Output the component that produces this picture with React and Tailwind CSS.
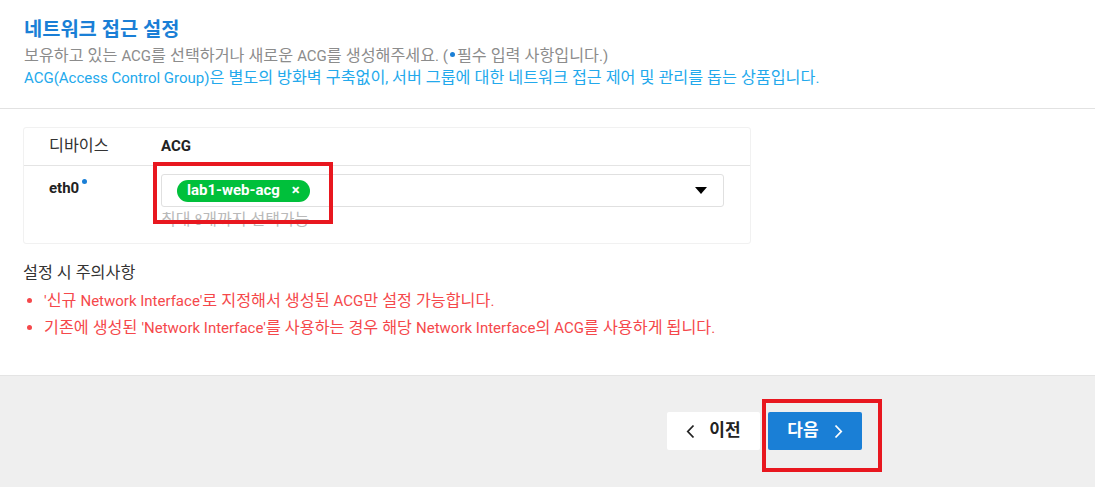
import React from "react";

const font = "font-['Roboto','Noto_Sans_CJK_KR',sans-serif]";

// Hangul runs render narrower here than in the reference, so they get their own size
function Ko({ text, k }) {
  const parts = text.split(/([\uAC00-\uD7A3][\uAC00-\uD7A3 ]*)/);
  return parts.map((p, i) =>
    /[\uAC00-\uD7A3]/.test(p) ? (
      <span key={i} className={k}>
        {p}
      </span>
    ) : (
      p
    )
  );
}

function Dot({ className = "" }) {
  return <span className={"inline-block w-[5px] h-[5px] rounded-full bg-[#1a7fd6] " + className} />;
}

const ko = "text-[16.2px]";

export default function App() {
  return (
    <div className={"w-[1095px] h-[487px] bg-white flex flex-col overflow-hidden " + font}>
      {/* Header */}
      <div className="px-6 pt-[18px] pb-[19px] border-b border-[#e2e2e2]">
        <h1 className="text-[17px] font-bold text-[#1a7fd6] leading-6">
          <Ko text="네트워크 접근 설정" k="text-[19.8px]" />
        </h1>
        <p className="mt-[3px] text-[15px] leading-[22px] text-[#8c8c8c]">
          <Ko text="보유하고 있는 ACG를 선택하거나 새로운 ACG를 생성해주세요. (" k={ko} />
          <Dot className="mb-[4px] mx-[2px]" />
          <Ko text="필수 입력 사항입니다.)" k={ko} />
        </p>
        <p className="text-[15px] leading-[22px] text-[#23a9ec]">
          <Ko text="ACG(Access Control Group)은 별도의 방화벽 구축없이, 서버 그룹에 대한 네트워크 접근 제어 및 관리를 돕는 상품입니다." k={ko} />
        </p>
      </div>

      {/* Body */}
      <div className="px-[23px] pt-[18px] flex-1">
        <div className="w-[728px] border border-[#f1f1f1] rounded-[3px]">
          <div className="flex h-[38px] items-center border-b border-[#e4e4e4] text-[15px]">
            <div className="w-[137px] pl-[25px] text-[#333]">
              <Ko text="디바이스" k={ko} />
            </div>
            <div className="font-bold text-[#222]">ACG</div>
          </div>
          <div className="flex pt-2 pb-[13px]">
            <div className="w-[137px] pl-[25px] pt-[3px] text-[15px] font-bold text-[#222]">
              eth0<Dot className="ml-[3px] mb-[9px]" />
            </div>
            <div className="relative">
              <div className="w-[563px] h-[33px] border border-[#e0e0e0] rounded-[3px] flex items-center px-[15px]">
                <span className="h-[22px] rounded-full bg-[#00c03b] text-white text-[15px] font-bold flex items-center pl-[10px] pr-[10px]">
                  lab1-web-acg
                  <span className="ml-[12px] text-[15px] leading-none">×</span>
                </span>
                <span className="ml-auto mr-[1px] w-0 h-0 border-l-[6px] border-r-[6px] border-t-[7px] border-l-transparent border-r-transparent border-t-black" />
              </div>
              <div className="mt-[3px] text-[14px] leading-5 text-[#b9b9b9]">
                <Ko text="최대 8개까지 선택가능" k="text-[16px]" />
              </div>
              <div className="absolute left-[-8px] top-[-12px] w-[180px] h-[62px] border-[4px] border-[#e8171f]" />
            </div>
          </div>
        </div>

        <div className="mt-[19px] text-[15px] text-[#333] leading-5">
          <Ko text="설정 시 주의사항" k={ko} />
        </div>
        <ul className="mt-[4px] text-[15px] text-[#f5484b] leading-[27px]">
          <li className="flex items-center h-[27px]">
            <span className="w-[5px] h-[5px] rounded-full bg-[#f5484b] ml-[4px] mr-[12px] shrink-0" />
            <span>
              <Ko text="'신규 Network Interface'로 지정해서 생성된 ACG만 설정 가능합니다." k={ko} />
            </span>
          </li>
          <li className="flex items-center h-[27px]">
            <span className="w-[5px] h-[5px] rounded-full bg-[#f5484b] ml-[4px] mr-[12px] shrink-0" />
            <span>
              <Ko text="기존에 생성된 'Network Interface'를 사용하는 경우 해당 Network Interface의 ACG를 사용하게 됩니다." k={ko} />
            </span>
          </li>
        </ul>
      </div>

      {/* Footer */}
      <div className="h-[112px] bg-[#efefef] border-t border-[#e4e4e4] flex justify-end pr-[233px] pt-[36px]">
        <div className="flex gap-2 h-[38px]">
          <button className="w-[93px] bg-white rounded-[2px] flex items-center justify-center gap-[14px] text-[15px] font-bold text-[#222]">
            <svg width="9" height="15" viewBox="0 0 9 15"><path d="M7.5 1.5 L1.8 7.5 L7.5 13.5" fill="none" stroke="#222" strokeWidth="1.8" /></svg>
            <Ko text="이전" k="text-[17px]" />
          </button>
          <div className="relative">
            <button className="w-[94px] h-[38px] bg-[#1a7fd6] rounded-[2px] flex items-center justify-center gap-[15px] text-[15px] font-bold text-white">
              <Ko text="다음" k="text-[17px]" />
              <svg width="9" height="15" viewBox="0 0 9 15"><path d="M1.5 1.5 L7.2 7.5 L1.5 13.5" fill="none" stroke="#fff" strokeWidth="1.8" /></svg>
            </button>
            <div className="absolute left-[-6px] top-[-13px] w-[120px] h-[73px] border-[4px] border-[#e8171f]" />
          </div>
        </div>
      </div>
    </div>
  );
}
